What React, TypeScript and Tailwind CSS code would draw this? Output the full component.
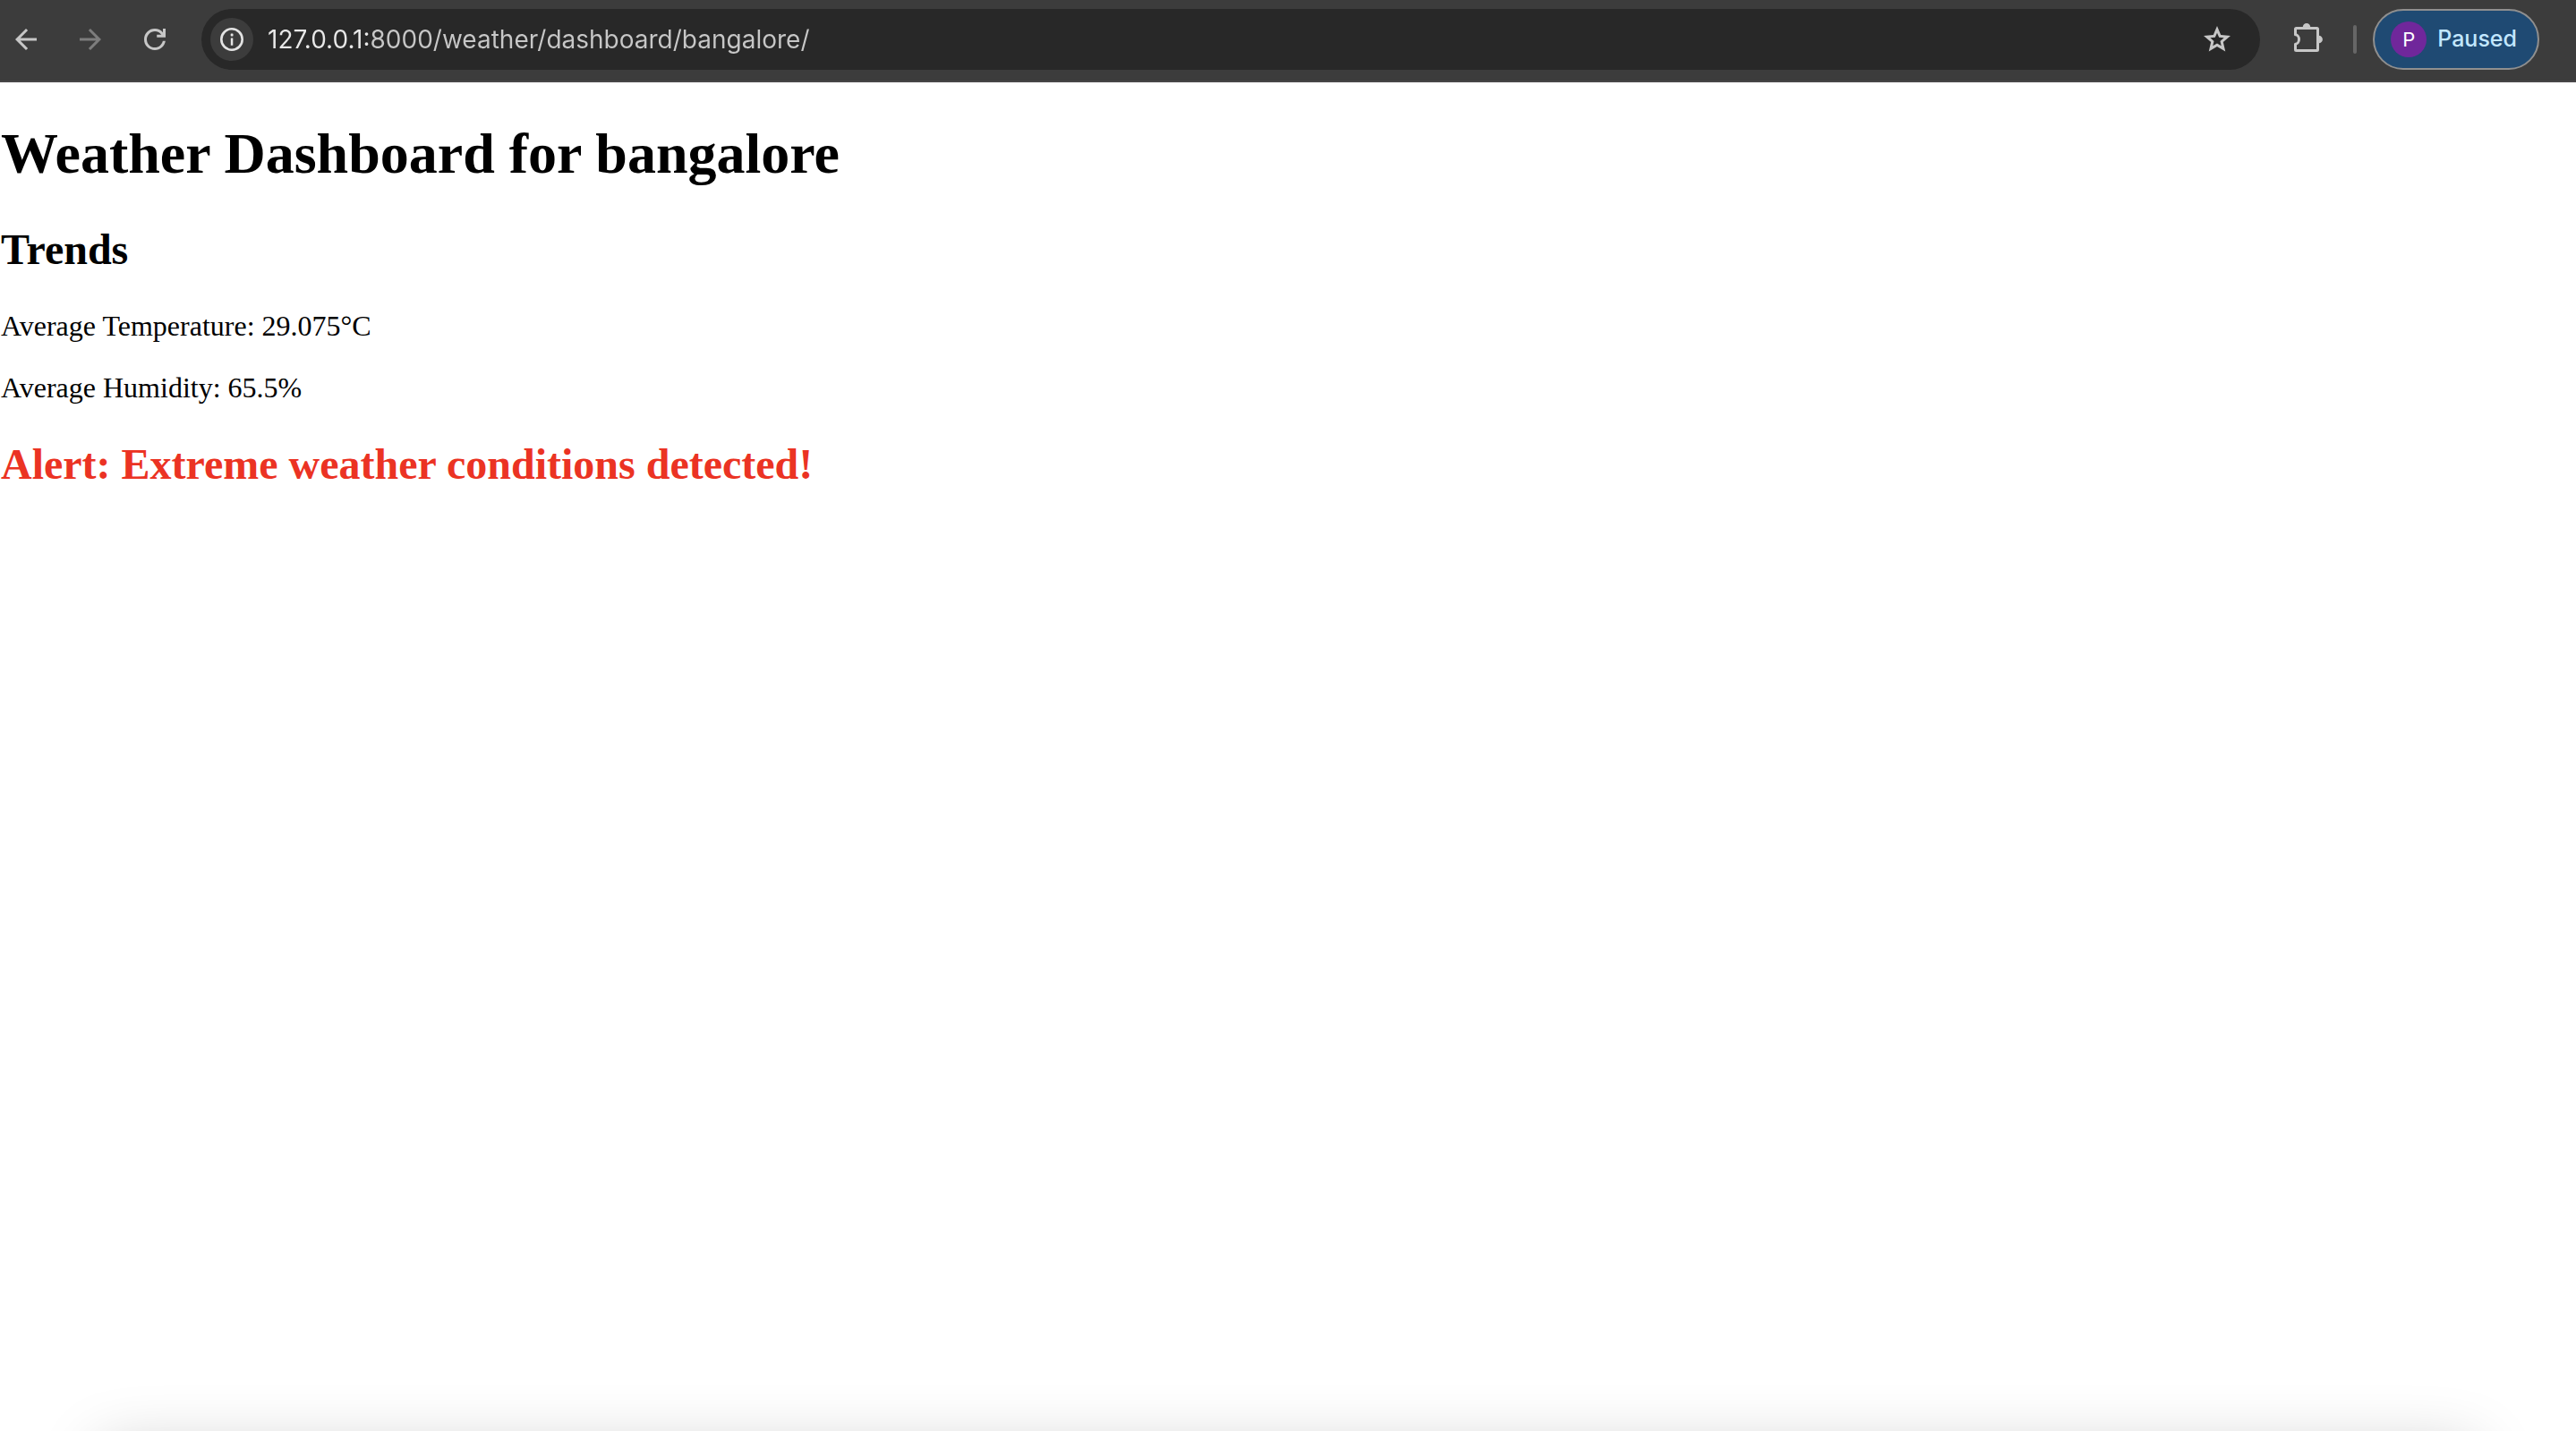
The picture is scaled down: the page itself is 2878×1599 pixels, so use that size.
import { useState } from "react";

function BackIcon() {
  return (
    <svg viewBox="0 0 24 24" className="size-9" fill="currentColor" aria-hidden="true">
      <path d="M7.825 13l5.6 5.6L12 20l-8-8 8-8 1.425 1.4L7.825 11H20v2H7.825z" />
    </svg>
  );
}

function ForwardIcon() {
  return (
    <svg viewBox="0 0 24 24" className="size-9" fill="currentColor" aria-hidden="true">
      <path d="M16.175 13l-5.6 5.6L12 20l8-8-8-8-1.425 1.4 5.6 5.6H4v2h12.175z" />
    </svg>
  );
}

function ReloadIcon() {
  return (
    <svg viewBox="0 0 24 24" className="size-9" fill="currentColor" aria-hidden="true">
      <path d="M12 20c-2.233 0-4.125-.775-5.675-2.325S4 14.233 4 12s.775-4.125 2.325-5.675S9.767 4 12 4c1.15 0 2.25.238 3.3.713S17.25 5.867 18 6.75V4h2v6.5h-6.5v-2h3.35c-.55-.8-1.2-1.4-2.05-1.85S13.083 6 12 6c-1.667 0-3.083.583-4.25 1.75S6 10.333 6 12s.583 3.083 1.75 4.25S10.333 18 12 18c1.45 0 2.72-.45 3.82-1.36S17.6 14.6 17.9 13.2h2.03c-.3 1.95-1.19 3.57-2.66 4.87S14.03 20 12 20z" />
    </svg>
  );
}

function InfoIcon() {
  return (
    <svg viewBox="0 0 32 32" className="size-8" fill="none" aria-hidden="true">
      <circle cx="16" cy="16" r="11.7" stroke="currentColor" strokeWidth="2.6" />
      <rect x="14.7" y="9.4" width="2.8" height="3" rx="0.6" fill="currentColor" />
      <rect x="14.8" y="14.4" width="2.5" height="8.4" rx="0.4" fill="currentColor" />
    </svg>
  );
}

function StarIcon() {
  return (
    <svg viewBox="0 0 24 24" className="size-9" fill="currentColor" aria-hidden="true">
      <path d="m8.85 16.825 3.15-1.9 3.15 1.925-.825-3.6 2.775-2.4-3.65-.325-1.45-3.4-1.45 3.375-3.65.325 2.775 2.425-.825 3.575zM5.825 21l1.625-7.025L2 9.25l7.2-.625L12 2l2.8 6.625 7.2.625-5.45 4.725L18.175 21 12 17.275 5.825 21z" />
    </svg>
  );
}

function PuzzleIcon() {
  return (
    <svg viewBox="0 0 36 36" className="size-9" fill="none" aria-hidden="true">
      <path
        d="M3.5 12.8V6.5a1 1 0 0 1 1-1h23a1 1 0 0 1 1 1v23a1 1 0 0 1-1 1h-23a1 1 0 0 1-1-1v-6.300a4 5.200 0 0 0 0-10.400z"
        stroke="none"
      />
      <path
        d="M3.500 12.800V6.500a1 1 0 0 1 1-1h23a1 1 0 0 1 1 1v23a1 1 0 0 1-1 1h-23a1 1 0 0 1-1-1v-6.300a4 5.200 0 0 0 0-10.400z"
        stroke="currentColor"
        strokeWidth="3"
        strokeLinejoin="round"
      />
      <path d="M11.700 4.400a4.300 4.300 0 0 1 8.600 0zM29.600 13.700a4.300 4.300 0 0 1 0 8.600z" fill="currentColor" />
    </svg>
  );
}

function Toolbar() {
  const [url, setUrl] = useState("127.0.0.1:8000/weather/dashboard/bangalore/");
  return (
    <header className="flex h-[92px] items-center border-b-2 border-[#484648] bg-[#3c3c3c] pr-[41px] pb-0.5 pl-[11px] font-[Inter,sans-serif] text-[#c7c7c7]">
      <nav className="flex gap-9" aria-label="History">
        <button type="button" aria-label="Back">
          <BackIcon />
        </button>
        <button type="button" aria-label="Forward" disabled className="text-[#7d7d7d]">
          <ForwardIcon />
        </button>
        <button type="button" aria-label="Reload">
          <ReloadIcon />
        </button>
      </nav>
      <div className="ml-[34px] flex h-[68px] flex-1 items-center rounded-full bg-[#282828] pr-[30px] pl-2.5">
        <button
          type="button"
          aria-label="View site information"
          className="flex size-12 items-center justify-center rounded-full bg-[#3c3c3c] text-[#e3e3e3]"
        >
          <InfoIcon />
        </button>
        <input
          type="text"
          aria-label="Address"
          value={url}
          onChange={(e) => setUrl(e.target.value)}
          spellCheck={false}
          className="ml-4 h-12 min-w-0 flex-1 bg-linear-to-r from-[#e8e8e8] from-[116px] to-[#c7c7c7] to-[116px] bg-clip-text text-[28px] text-transparent caret-white outline-none"
        />
        <button type="button" aria-label="Bookmark this tab">
          <StarIcon />
        </button>
      </div>
      <button type="button" aria-label="Extensions" className="ml-9">
        <PuzzleIcon />
      </button>
      <div className="ml-8 h-8 w-1 rounded-full bg-[#666666]" />
      <button
        type="button"
        className="ml-[18px] flex h-[68px] items-center gap-3 rounded-full border-2 border-[#8f8f8f] bg-[#1f4a73] pr-[23px] pl-[18px] text-[25px] font-medium text-[#c2e7ff]"
      >
        <span className="flex size-10 items-center justify-center rounded-full bg-[#70279b] text-[22px] font-normal text-white">
          P
        </span>
        Paused
      </button>
    </header>
  );
}

export default function App() {
  return (
    <div className="relative flex min-h-screen flex-col overflow-hidden bg-white">
      <Toolbar />
      <main className="flex-1 pt-11 pl-px font-['Liberation_Serif',serif] text-[32px] leading-[37px] text-black">
        <h1 className="text-[64px] leading-[72px] font-bold">Weather Dashboard for bangalore</h1>
        <h2 className="mt-11 text-[48px] leading-[54px] font-bold">Trends</h2>
        <p className="mt-10">Average Temperature: 29.075°C</p>
        <p className="mt-8">Average Humidity: 65.5%</p>
        <h2 className="mt-10 text-[48px] leading-[54px] font-bold text-[#eb3323]">
          Alert: Extreme weather conditions detected!
        </h2>
      </main>
      <div
        aria-hidden="true"
        className="absolute inset-x-28 top-full h-40 shadow-[0_20px_70px_rgba(0,0,0,0.22)]"
      />
    </div>
  );
}
